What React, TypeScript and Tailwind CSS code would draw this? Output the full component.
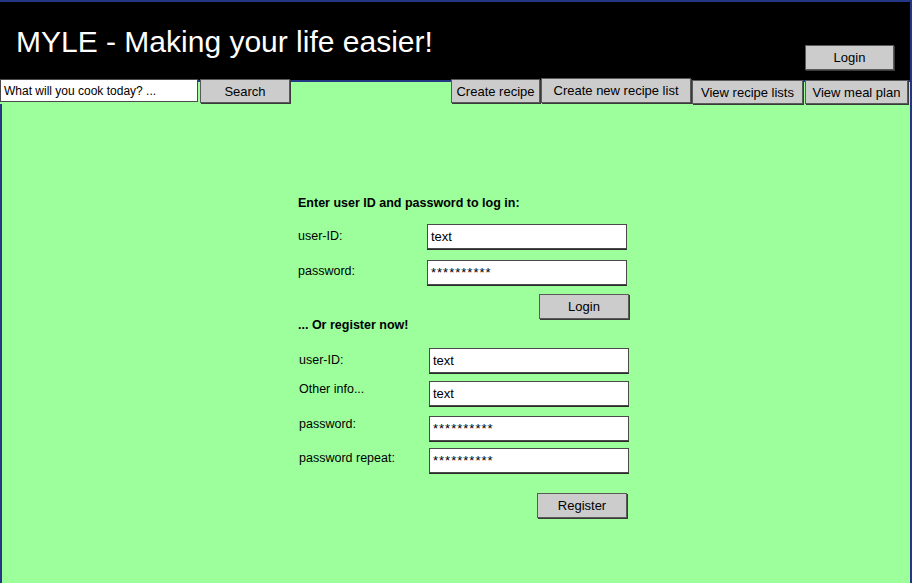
import React from 'react';

const sketch = { fontFamily: '"Liberation Sans", Arial, sans-serif' };

interface BtnProps {
  label: string;
  className: string;
}

const SketchButton: React.FC<BtnProps> = ({ label, className }) => (
  <button
    type="button"
    className={`flex items-center justify-center bg-[#cccccc] border border-[#5a5a5a] shadow-[1px_1px_0_#3a3a3a] text-[13px] text-black leading-none ${className}`}
  >
    {label}
  </button>
);

interface FieldProps {
  label: string;
  value: string;
  labelClass: string;
  labelWidth: string;
  rowClass: string;
}

const Field: React.FC<FieldProps> = ({ label, value, labelClass, labelWidth, rowClass }) => {
  const masked = value.startsWith('*');
  return (
    <div className={`flex items-start h-[25px] ${rowClass}`}>
      <span className={`${labelWidth} text-[12.5px] leading-[16px] text-black ${labelClass}`}>{label}</span>
      <div className="w-[200px] h-[25px] flex items-center bg-white border border-[#4a4a4a] shadow-[0_1px_0_#2a2a2a] px-[3px]">
        <span className={`text-[13px] leading-none text-black ${masked ? 'tracking-[1px]' : ''}`}>{value}</span>
      </div>
    </div>
  );
};

export default function App() {
  return (
    <div
      className="w-[912px] h-[583px] overflow-hidden flex flex-col bg-[#9cff9c] border-t-2 border-r-2 border-[#233785]"
      style={sketch}
    >
      {/* header */}
      <header className="h-[80px] shrink-0 flex justify-between bg-black border-b-2 border-[#233785] pl-[16px] pr-[16px]">
        <h1 className="pt-[25px] text-[30px] leading-none text-white font-normal">MYLE - Making your life easier!</h1>
        <SketchButton label="Login" className="self-end mb-[10px] w-[89px] h-[25px]" />
      </header>

      {/* toolbar */}
      <div className="-mt-[4px] flex items-start h-[26px] shrink-0 pr-[2px]">
        <div className="mt-[1px] w-[198px] h-[23px] bg-white border border-[#4a4a4a] flex items-center pl-[3px]">
          <span className="text-[12px] leading-none text-black">What will you cook today? ...</span>
        </div>
        <SketchButton label="Search" className="ml-[2px] mt-[1px] w-[90px] h-[24px]" />
        <div className="flex-1" />
        <SketchButton label="Create recipe" className="mt-[1px] w-[89px] h-[24px]" />
        <SketchButton label="Create new recipe list" className="ml-[1px] w-[150px] h-[25px]" />
        <SketchButton label="View recipe lists" className="ml-[1px] mt-[2px] w-[111px] h-[24px]" />
        <SketchButton label="View meal plan" className="ml-[2px] mt-[2px] w-[103px] h-[24px]" />
      </div>

      {/* login / register form */}
      <main className="flex-1 border-l-2 border-[#233785] pt-[91px] pl-[296px]">
        <div className="w-[331px] flex flex-col">
          <p className="text-[12.5px] leading-[16px] font-bold text-black">Enter user ID and password to log in:</p>
          <Field label="user-ID:" value="text" labelWidth="w-[129px]" labelClass="pt-[4px]" rowClass="mt-[13px]" />
          <Field label="password:" value="**********" labelWidth="w-[129px]" labelClass="pt-[3px]" rowClass="mt-[11px]" />
          <div className="flex justify-end mt-[9px]">
            <SketchButton label="Login" className="w-[90px] h-[25px]" />
          </div>

          <p className="-mt-[2px] text-[12.5px] leading-[16px] font-bold text-black">... Or register now!</p>
          <div className="pl-[1px] flex flex-col">
            <Field label="user-ID:" value="text" labelWidth="w-[130px]" labelClass="pt-[4px]" rowClass="mt-[15px]" />
            <Field label="Other info..." value="text" labelWidth="w-[130px]" labelClass="pt-0" rowClass="mt-[8px]" />
            <Field label="password:" value="**********" labelWidth="w-[130px]" labelClass="pt-0" rowClass="mt-[10px]" />
            <Field label="password repeat:" value="**********" labelWidth="w-[130px]" labelClass="pt-[2px]" rowClass="mt-[7px]" />
          </div>
          <div className="flex justify-end mt-[20px] pr-[2px]">
            <SketchButton label="Register" className="w-[90px] h-[25px]" />
          </div>
        </div>
      </main>
    </div>
  );
}
